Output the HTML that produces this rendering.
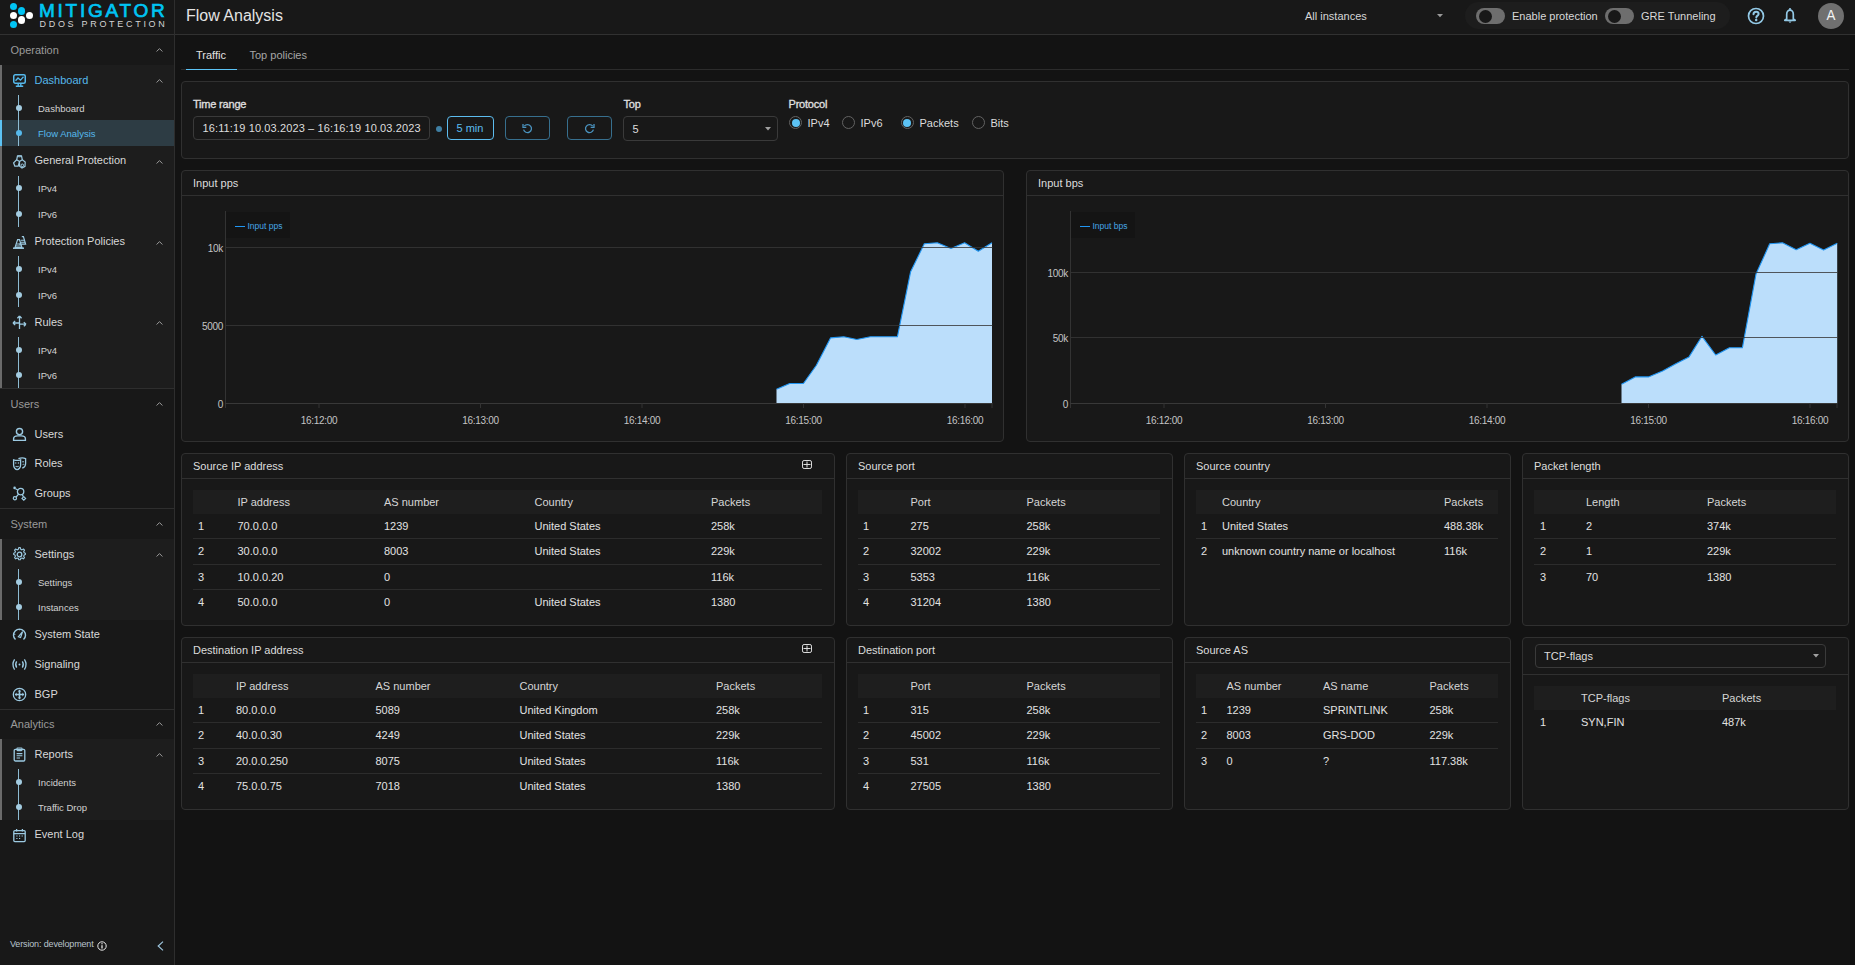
<!DOCTYPE html><html><head><meta charset="utf-8"><title>Flow Analysis</title><style>
*{box-sizing:border-box}
html,body{margin:0;padding:0}
body{width:1855px;height:965px;overflow:hidden;background:#131313;font-family:"Liberation Sans",sans-serif;position:relative}
.a{position:absolute}
.t{position:absolute;white-space:nowrap}
svg{position:absolute;overflow:visible}
</style></head><body>
<div class="a" style="left:0px;top:0px;width:1855px;height:34px;background:#181818"></div>
<div class="a" style="left:0px;top:34px;width:1855px;height:1px;background:#313131"></div>
<div class="a" style="left:1850px;top:35px;width:5px;height:930px;background:#101010"></div>
<div class="a" style="left:0px;top:35px;width:174px;height:930px;background:#181818"></div>
<div class="a" style="left:174px;top:0px;width:1px;height:965px;background:#2e2e2e"></div>
<div class="a" style="left:9.899999999999999px;top:2.8999999999999995px;width:7.4px;height:7.4px;border-radius:50%;background:#00c4f4"></div>
<div class="a" style="left:17.7px;top:7.2px;width:7.4px;height:7.4px;border-radius:50%;background:#00c4f4"></div>
<div class="a" style="left:9.899999999999999px;top:11.8px;width:7.4px;height:7.4px;border-radius:50%;background:#ffffff"></div>
<div class="a" style="left:25.7px;top:11.8px;width:7.4px;height:7.4px;border-radius:50%;background:#ffffff"></div>
<div class="a" style="left:17.7px;top:16.2px;width:7.4px;height:7.4px;border-radius:50%;background:#ffffff"></div>
<div class="a" style="left:9.899999999999999px;top:20.8px;width:7.4px;height:7.4px;border-radius:50%;background:#00c4f4"></div>
<div class="t" style="left:39px;top:1px;font-size:19px;line-height:19px;color:#00c4f4;letter-spacing:2.75px;-webkit-text-stroke:0.7px #00c4f4">MITIGATOR</div>
<div class="t" style="left:39.5px;top:20px;font-size:9px;line-height:9px;color:#d4d4d4;letter-spacing:2.7px">DDOS PROTECTION</div>
<div class="t" style="left:186px;top:8px;font-size:16px;line-height:16px;color:#e4e4e4;">Flow Analysis</div>
<div class="t" style="left:1305px;top:11px;font-size:11px;line-height:11px;color:#d6d6d6;">All instances</div>
<svg style="left:1436.5px;top:13.5px" width="6" height="4"><path d="M0 0 L6 0 L3 3.2 Z" fill="#9a9a9a"/></svg>
<div class="a" style="left:1465px;top:2px;width:265px;height:27px;background:#1d1d1d;border-radius:14px"></div>
<div class="a" style="left:1476px;top:8px;width:29px;height:16px;background:#6e6e6e;border-radius:8px"></div>
<div class="a" style="left:1479px;top:9.5px;width:13px;height:13px;background:#181818;border-radius:50%"></div>
<div class="a" style="left:1605px;top:8px;width:29px;height:16px;background:#6e6e6e;border-radius:8px"></div>
<div class="a" style="left:1608px;top:9.5px;width:13px;height:13px;background:#181818;border-radius:50%"></div>
<div class="t" style="left:1512px;top:11px;font-size:11px;line-height:11px;color:#d8d8d8;">Enable protection</div>
<div class="t" style="left:1641px;top:11px;font-size:11px;line-height:11px;color:#d8d8d8;">GRE Tunneling</div>
<svg style="left:1747px;top:7px" width="18" height="18" viewBox="0 0 18 18"><circle cx="9" cy="9" r="7.5" fill="none" stroke="#93c9e6" stroke-width="1.7"/><path d="M6.5 7.2 C6.5 5.5 7.7 4.7 9.1 4.7 C10.6 4.7 11.6 5.6 11.6 6.9 C11.6 8.5 9.4 8.7 9.3 10.4" fill="none" stroke="#93c9e6" stroke-width="2" stroke-linecap="round"/><circle cx="9.2" cy="13.1" r="1.25" fill="#93c9e6"/></svg>
<svg style="left:1784px;top:8px" width="12" height="15" viewBox="0 0 12 15"><rect x="5.2" y="0" width="1.6" height="2.2" fill="#93c9e6"/><path d="M2.7 11 L2.7 6.2 C2.7 3.7 4.1 2.2 6 2.2 C7.9 2.2 9.3 3.7 9.3 6.2 L9.3 11 L11.2 12.3 L0.8 12.3 Z" fill="none" stroke="#93c9e6" stroke-width="1.7" stroke-linejoin="round"/><path d="M4.4 13.4 L7.6 13.4 L6 14.9 Z" fill="#93c9e6"/></svg>
<div class="a" style="left:1818px;top:3px;width:26px;height:26px;background:#707070;border-radius:50%"></div>
<div class="t" style="left:1818px;top:5px;width:26px;text-align:center;font-size:15.5px;line-height:20px;color:#f4f4f4;transform:scaleX(0.86)">A</div>
<div class="a" style="left:0px;top:35px;width:174px;height:30px;background:#181818"></div>
<div class="t" style="left:10.5px;top:45px;font-size:11px;line-height:11px;color:#9a9a9a;">Operation</div>
<svg style="left:156px;top:48px" width="7" height="4" viewBox="0 0 7 4"><path d="M0.6 3.5 L3.5 0.6 L6.4 3.5" fill="none" stroke="#a9a9a9" stroke-width="0.9"/></svg>
<div class="a" style="left:0px;top:65px;width:174px;height:323px;background:#1d1d1d"></div>
<div class="a" style="left:0px;top:65px;width:2px;height:323px;background:#6b6b6b"></div>
<svg style="left:12px;top:73px" width="15" height="15" viewBox="0 0 15 15"><rect x="1.75" y="1.75" width="11.5" height="8.5" rx="1.5" fill="none" stroke="#56b9ec" stroke-width="1.5"/><path d="M3.5 7.8 L6 5 L8.5 7.2 L11.5 3.8" fill="none" stroke="#56b9ec" stroke-width="1.3"/><path d="M6.2 10.5 L6.2 12.5 M8.8 10.5 L8.8 12.5 M3.8 13.3 L11.2 13.3" stroke="#56b9ec" stroke-width="1.4"/></svg>
<div class="t" style="left:34.5px;top:74.6px;font-size:11px;line-height:11px;color:#56b9ec;">Dashboard</div>
<svg style="left:156px;top:79px" width="7" height="4" viewBox="0 0 7 4"><path d="M0.6 3.5 L3.5 0.6 L6.4 3.5" fill="none" stroke="#a9a9a9" stroke-width="0.9"/></svg>
<div class="t" style="left:38px;top:103.5px;font-size:9.5px;line-height:9.5px;color:#d2d2d2;">Dashboard</div>
<div class="a" style="left:0px;top:120.25px;width:174px;height:25.5px;background:#2d3c44"></div>
<div class="a" style="left:0px;top:120.25px;width:2px;height:25.5px;background:#5cc3f5"></div>
<div class="t" style="left:38px;top:129.0px;font-size:9.5px;line-height:9.5px;color:#56b9ec;">Flow Analysis</div>
<div class="a" style="left:18px;top:94.75px;width:1.2px;height:51px;background:#8dbbd2"></div>
<div class="a" style="left:15.600000000000001px;top:104.5px;width:6px;height:6px;border-radius:50%;background:#a3cbe0"></div>
<div class="a" style="left:15.600000000000001px;top:130.0px;width:6px;height:6px;border-radius:50%;background:#56b9ec"></div>
<svg style="left:12px;top:153.75px" width="15" height="15" viewBox="0 0 15 15"><path d="M5.5 1.8 L9.5 1.8 L10.3 5.8 L7.5 7.6 L4.7 5.8 Z" fill="none" stroke="#9ccae2" stroke-width="1.2"/><ellipse cx="7.5" cy="2.3" rx="1.6" ry="0.6" fill="none" stroke="#9ccae2" stroke-width="0.9"/><path d="M4.7 5.8 L1.6 8.8 L2.8 12.2 L6.2 12.2 L7.5 7.6" fill="none" stroke="#9ccae2" stroke-width="1.2"/><path d="M10.3 5.8 L13.2 8 L13 12.3 L10 14 L7.6 12.3 L7.5 7.6" fill="none" stroke="#9ccae2" stroke-width="1.2"/><circle cx="10.3" cy="11.3" r="1.3" fill="none" stroke="#9ccae2" stroke-width="1"/></svg>
<div class="t" style="left:34.5px;top:155.35px;font-size:11px;line-height:11px;color:#d8d8d8;">General Protection</div>
<svg style="left:156px;top:159.75px" width="7" height="4" viewBox="0 0 7 4"><path d="M0.6 3.5 L3.5 0.6 L6.4 3.5" fill="none" stroke="#a9a9a9" stroke-width="0.9"/></svg>
<div class="t" style="left:38px;top:184.25px;font-size:9.5px;line-height:9.5px;color:#d2d2d2;">IPv4</div>
<div class="t" style="left:38px;top:209.75px;font-size:9.5px;line-height:9.5px;color:#d2d2d2;">IPv6</div>
<div class="a" style="left:18px;top:175.5px;width:1.2px;height:51px;background:#8dbbd2"></div>
<div class="a" style="left:15.600000000000001px;top:185.25px;width:6px;height:6px;border-radius:50%;background:#a3cbe0"></div>
<div class="a" style="left:15.600000000000001px;top:210.75px;width:6px;height:6px;border-radius:50%;background:#a3cbe0"></div>
<svg style="left:12px;top:234.5px" width="15" height="15" viewBox="0 0 15 15"><path d="M9.8 1.6 L11.4 1.6 L13.6 9.2 L7.2 9.2" fill="none" stroke="#9ccae2" stroke-width="1.2"/><path d="M8.6 5.2 L12.6 5.2 M8.3 7.3 L13.2 7.3" stroke="#9ccae2" stroke-width="1.1"/><path d="M5.6 4.6 L7.4 4.6 L10 12.6 L3 12.6 Z" fill="none" stroke="#9ccae2" stroke-width="1.2"/><path d="M1 13.2 L12 13.2" stroke="#9ccae2" stroke-width="1.5"/><path d="M4.5 9 L8.6 9 M4 11 L9.2 11" stroke="#9ccae2" stroke-width="1.1"/></svg>
<div class="t" style="left:34.5px;top:236.1px;font-size:11px;line-height:11px;color:#d8d8d8;">Protection Policies</div>
<svg style="left:156px;top:240.5px" width="7" height="4" viewBox="0 0 7 4"><path d="M0.6 3.5 L3.5 0.6 L6.4 3.5" fill="none" stroke="#a9a9a9" stroke-width="0.9"/></svg>
<div class="t" style="left:38px;top:265.0px;font-size:9.5px;line-height:9.5px;color:#d2d2d2;">IPv4</div>
<div class="t" style="left:38px;top:290.5px;font-size:9.5px;line-height:9.5px;color:#d2d2d2;">IPv6</div>
<div class="a" style="left:18px;top:256.25px;width:1.2px;height:51px;background:#8dbbd2"></div>
<div class="a" style="left:15.600000000000001px;top:266.0px;width:6px;height:6px;border-radius:50%;background:#a3cbe0"></div>
<div class="a" style="left:15.600000000000001px;top:291.5px;width:6px;height:6px;border-radius:50%;background:#a3cbe0"></div>
<svg style="left:12px;top:315.25px" width="15" height="15" viewBox="0 0 15 15"><path d="M7.5 1 L7.5 14 M7.5 1 L5.4 3.2 M7.5 1 L9.6 3.2" fill="none" stroke="#9ccae2" stroke-width="1.3"/><path d="M1 8 L7.3 8 M1 8 L3.2 5.9 M1 8 L3.2 10.1" fill="none" stroke="#9ccae2" stroke-width="1.3"/><path d="M7.7 9.2 L14 9.2 M14 9.2 L11.8 7.1 M14 9.2 L11.8 11.3" fill="none" stroke="#9ccae2" stroke-width="1.3"/></svg>
<div class="t" style="left:34.5px;top:316.85px;font-size:11px;line-height:11px;color:#d8d8d8;">Rules</div>
<svg style="left:156px;top:321.25px" width="7" height="4" viewBox="0 0 7 4"><path d="M0.6 3.5 L3.5 0.6 L6.4 3.5" fill="none" stroke="#a9a9a9" stroke-width="0.9"/></svg>
<div class="t" style="left:38px;top:345.75px;font-size:9.5px;line-height:9.5px;color:#d2d2d2;">IPv4</div>
<div class="t" style="left:38px;top:371.25px;font-size:9.5px;line-height:9.5px;color:#d2d2d2;">IPv6</div>
<div class="a" style="left:18px;top:337.0px;width:1.2px;height:51px;background:#8dbbd2"></div>
<div class="a" style="left:15.600000000000001px;top:346.75px;width:6px;height:6px;border-radius:50%;background:#a3cbe0"></div>
<div class="a" style="left:15.600000000000001px;top:372.25px;width:6px;height:6px;border-radius:50%;background:#a3cbe0"></div>
<div class="a" style="left:0px;top:388px;width:174px;height:1px;background:#2e2e2e"></div>
<div class="a" style="left:0px;top:389px;width:174px;height:30px;background:#181818"></div>
<div class="t" style="left:10.5px;top:399px;font-size:11px;line-height:11px;color:#9a9a9a;">Users</div>
<svg style="left:156px;top:402px" width="7" height="4" viewBox="0 0 7 4"><path d="M0.6 3.5 L3.5 0.6 L6.4 3.5" fill="none" stroke="#a9a9a9" stroke-width="0.9"/></svg>
<svg style="left:12px;top:426.75px" width="15" height="15" viewBox="0 0 15 15"><circle cx="7.5" cy="4.6" r="3.1" fill="none" stroke="#9ccae2" stroke-width="1.4"/><path d="M1.6 13.4 L1.6 11.8 C1.6 10 3.6 8.9 5.6 8.9 L9.4 8.9 C11.4 8.9 13.4 10 13.4 11.8 L13.4 13.4 Z" fill="none" stroke="#9ccae2" stroke-width="1.4"/></svg>
<div class="t" style="left:34.5px;top:429px;font-size:11px;line-height:11px;color:#d8d8d8;">Users</div>
<svg style="left:12px;top:456.25px" width="15" height="15" viewBox="0 0 15 15"><path d="M1.6 3.8 C4 4.6 6.5 4.6 8.6 3.8 L8.6 9 C8.6 11.5 6.7 13.6 5.1 13.6 C3.5 13.6 1.6 11.5 1.6 9 Z" fill="none" stroke="#9ccae2" stroke-width="1.3"/><path d="M6.4 2.6 C9 1.6 11.4 1.6 13.6 2.6 L13.6 7.5 C13.6 9.8 12.2 11.5 10.3 12" fill="none" stroke="#9ccae2" stroke-width="1.3"/><path d="M3.6 10 C4.5 11 5.7 11 6.6 10" fill="none" stroke="#9ccae2" stroke-width="1.1"/><circle cx="3.8" cy="7" r="0.7" fill="#9ccae2"/><circle cx="6.4" cy="7" r="0.7" fill="#9ccae2"/><path d="M10.2 5.8 L12 5.8 M10.6 8.6 C11.2 8.2 11.8 8.2 12.3 8.6" stroke="#9ccae2" stroke-width="1"/></svg>
<div class="t" style="left:34.5px;top:458px;font-size:11px;line-height:11px;color:#d8d8d8;">Roles</div>
<svg style="left:12px;top:485.75px" width="15" height="15" viewBox="0 0 15 15"><circle cx="8.6" cy="5.6" r="3.2" fill="none" stroke="#9ccae2" stroke-width="1.3"/><circle cx="2.6" cy="1.9" r="1.3" fill="#9ccae2"/><path d="M3.5 2.7 L6.3 4.2" stroke="#9ccae2" stroke-width="1.2"/><circle cx="2.9" cy="12.2" r="1.6" fill="none" stroke="#9ccae2" stroke-width="1.2"/><path d="M4.1 11 L6.6 8.2" stroke="#9ccae2" stroke-width="1.2"/><path d="M11.8 10.6 L13.6 12.4 L11.8 14.2 L10 12.4 Z" fill="none" stroke="#9ccae2" stroke-width="1.2"/><path d="M10 8.4 L11.4 10.6" stroke="#9ccae2" stroke-width="1.2"/></svg>
<div class="t" style="left:34.5px;top:488px;font-size:11px;line-height:11px;color:#d8d8d8;">Groups</div>
<div class="a" style="left:0px;top:508px;width:174px;height:1px;background:#2e2e2e"></div>
<div class="a" style="left:0px;top:509px;width:174px;height:30px;background:#181818"></div>
<div class="t" style="left:10.5px;top:519px;font-size:11px;line-height:11px;color:#9a9a9a;">System</div>
<svg style="left:156px;top:522px" width="7" height="4" viewBox="0 0 7 4"><path d="M0.6 3.5 L3.5 0.6 L6.4 3.5" fill="none" stroke="#a9a9a9" stroke-width="0.9"/></svg>
<div class="a" style="left:0px;top:539px;width:174px;height:80.75px;background:#1d1d1d"></div>
<div class="a" style="left:0px;top:539px;width:2px;height:80.75px;background:#6b6b6b"></div>
<svg style="left:12px;top:547px" width="15" height="15" viewBox="0 0 15 15"><path d="M6.6 1.2 L8.4 1.2 L8.9 3.2 L10.3 3.8 L12 2.8 L13.3 4.1 L12.3 5.8 L12.9 7.2 L14.3 7.7 L14.3 9.3 L12.9 9.8 L12.3 11.2 L13.3 12.9 L12 14.2 L10.3 13.2 L8.9 13.8 L8.4 15.3 L6.6 15.3 L6.1 13.8 L4.7 13.2 L3 14.2 L1.7 12.9 L2.7 11.2 L2.1 9.8 L0.7 9.3 L0.7 7.7 L2.1 7.2 L2.7 5.8 L1.7 4.1 L3 2.8 L4.7 3.8 L6.1 3.2 Z" transform="translate(1.1 -0.4) scale(0.86)" fill="none" stroke="#9ccae2" stroke-width="1.3" stroke-linejoin="round"/><circle cx="7.5" cy="7.5" r="2.3" fill="none" stroke="#9ccae2" stroke-width="1.3"/></svg>
<div class="t" style="left:34.5px;top:548.6px;font-size:11px;line-height:11px;color:#d8d8d8;">Settings</div>
<svg style="left:156px;top:553px" width="7" height="4" viewBox="0 0 7 4"><path d="M0.6 3.5 L3.5 0.6 L6.4 3.5" fill="none" stroke="#a9a9a9" stroke-width="0.9"/></svg>
<div class="t" style="left:38px;top:577.5px;font-size:9.5px;line-height:9.5px;color:#d2d2d2;">Settings</div>
<div class="t" style="left:38px;top:603.0px;font-size:9.5px;line-height:9.5px;color:#d2d2d2;">Instances</div>
<div class="a" style="left:18px;top:568.75px;width:1.2px;height:51px;background:#8dbbd2"></div>
<div class="a" style="left:15.600000000000001px;top:578.5px;width:6px;height:6px;border-radius:50%;background:#a3cbe0"></div>
<div class="a" style="left:15.600000000000001px;top:604.0px;width:6px;height:6px;border-radius:50%;background:#a3cbe0"></div>
<svg style="left:12px;top:626.625px" width="15" height="15" viewBox="0 0 15 15"><path d="M3.5 12.6 A6 6 0 1 1 11.5 12.6" fill="none" stroke="#9ccae2" stroke-width="1.4"/><path d="M6.3 9.8 L10.6 4.6 L8.6 10.6 Z" fill="none" stroke="#9ccae2" stroke-width="1.2"/><path d="M2.2 7 L3.3 7.4 M7.5 2 L7.5 3.3" stroke="#9ccae2" stroke-width="1.1"/></svg>
<div class="t" style="left:34.5px;top:629px;font-size:11px;line-height:11px;color:#d8d8d8;">System State</div>
<svg style="left:12px;top:657.375px" width="15" height="15" viewBox="0 0 15 15"><circle cx="7.5" cy="7.5" r="1" fill="#9ccae2"/><path d="M4.7 4.4 C3.5 6.2 3.5 8.8 4.7 10.6 M10.3 4.4 C11.5 6.2 11.5 8.8 10.3 10.6" fill="none" stroke="#9ccae2" stroke-width="1.3"/><path d="M2.6 2.4 C0.6 5.4 0.6 9.6 2.6 12.6 M12.4 2.4 C14.4 5.4 14.4 9.6 12.4 12.6" fill="none" stroke="#9ccae2" stroke-width="1.3"/></svg>
<div class="t" style="left:34.5px;top:659px;font-size:11px;line-height:11px;color:#d8d8d8;">Signaling</div>
<svg style="left:12px;top:687.125px" width="15" height="15" viewBox="0 0 15 15"><circle cx="7.5" cy="7.5" r="6.2" fill="none" stroke="#9ccae2" stroke-width="1.3"/><path d="M7.5 2.6 L9.4 4.6 L8.3 4.6 L8.3 6.7 L10.4 6.7 L10.4 5.6 L12.4 7.5 L10.4 9.4 L10.4 8.3 L8.3 8.3 L8.3 10.4 L9.4 10.4 L7.5 12.4 L5.6 10.4 L6.7 10.4 L6.7 8.3 L4.6 8.3 L4.6 9.4 L2.6 7.5 L4.6 5.6 L4.6 6.7 L6.7 6.7 L6.7 4.6 L5.6 4.6 Z" fill="#9ccae2"/></svg>
<div class="t" style="left:34.5px;top:689px;font-size:11px;line-height:11px;color:#d8d8d8;">BGP</div>
<div class="a" style="left:0px;top:709px;width:174px;height:1px;background:#2e2e2e"></div>
<div class="a" style="left:0px;top:710px;width:174px;height:29px;background:#181818"></div>
<div class="t" style="left:10.5px;top:719px;font-size:11px;line-height:11px;color:#9a9a9a;">Analytics</div>
<svg style="left:156px;top:722px" width="7" height="4" viewBox="0 0 7 4"><path d="M0.6 3.5 L3.5 0.6 L6.4 3.5" fill="none" stroke="#a9a9a9" stroke-width="0.9"/></svg>
<div class="a" style="left:0px;top:739px;width:174px;height:80.75px;background:#1d1d1d"></div>
<div class="a" style="left:0px;top:739px;width:2px;height:80.75px;background:#6b6b6b"></div>
<svg style="left:12px;top:747px" width="15" height="15" viewBox="0 0 15 15"><rect x="2.2" y="2.4" width="10.6" height="11.6" rx="1.2" fill="none" stroke="#9ccae2" stroke-width="1.3"/><rect x="5" y="1" width="5" height="2.6" rx="0.6" fill="none" stroke="#9ccae2" stroke-width="1.1"/><path d="M4.6 6.6 L10.4 6.6 M4.6 8.8 L10.4 8.8 M4.6 11 L8 11" stroke="#9ccae2" stroke-width="1.1"/></svg>
<div class="t" style="left:34.5px;top:748.6px;font-size:11px;line-height:11px;color:#d8d8d8;">Reports</div>
<svg style="left:156px;top:753px" width="7" height="4" viewBox="0 0 7 4"><path d="M0.6 3.5 L3.5 0.6 L6.4 3.5" fill="none" stroke="#a9a9a9" stroke-width="0.9"/></svg>
<div class="t" style="left:38px;top:777.5px;font-size:9.5px;line-height:9.5px;color:#d2d2d2;">Incidents</div>
<div class="t" style="left:38px;top:803.0px;font-size:9.5px;line-height:9.5px;color:#d2d2d2;">Traffic Drop</div>
<div class="a" style="left:18px;top:768.75px;width:1.2px;height:51px;background:#8dbbd2"></div>
<div class="a" style="left:15.600000000000001px;top:778.5px;width:6px;height:6px;border-radius:50%;background:#a3cbe0"></div>
<div class="a" style="left:15.600000000000001px;top:804.0px;width:6px;height:6px;border-radius:50%;background:#a3cbe0"></div>
<svg style="left:12px;top:827.5px" width="15" height="15" viewBox="0 0 15 15"><rect x="1.8" y="2.6" width="11.4" height="11" rx="1" fill="none" stroke="#9ccae2" stroke-width="1.3"/><path d="M1.8 5.6 L13.2 5.6 M4.6 1 L4.6 3.6 M10.4 1 L10.4 3.6" stroke="#9ccae2" stroke-width="1.3"/><path d="M4.3 8 L5.5 8 M7 8 L8.2 8 M9.6 8 L10.8 8 M4.3 10.5 L5.5 10.5 M7 10.5 L8.2 10.5" stroke="#9ccae2" stroke-width="1.1"/></svg>
<div class="t" style="left:34.5px;top:829px;font-size:11px;line-height:11px;color:#d8d8d8;">Event Log</div>
<div class="t" style="left:10px;top:940px;font-size:9px;line-height:9px;color:#b8c4cc;letter-spacing:-0.15px">Version: development</div>
<svg style="left:96.5px;top:940.5px" width="10" height="10" viewBox="0 0 10 10"><circle cx="5" cy="5" r="4.2" fill="none" stroke="#e8e8e8" stroke-width="1"/><path d="M5 4.2 L5 7.6" stroke="#e8e8e8" stroke-width="1.3"/><circle cx="5" cy="2.7" r="0.7" fill="#e8e8e8"/></svg>
<svg style="left:157px;top:940.5px" width="7" height="10" viewBox="0 0 7 10"><path d="M6 0.6 L1.2 5 L6 9.4" fill="none" stroke="#9cc4dc" stroke-width="1.2"/></svg>
<div class="a" style="left:181px;top:69px;width:1668px;height:1px;background:#2c2c2c"></div>
<div class="a" style="left:186px;top:68.7px;width:51px;height:1.6px;background:#5cc3f5"></div>
<div class="t" style="left:196px;top:50px;font-size:11px;line-height:11px;color:#e2e2e2;">Traffic</div>
<div class="t" style="left:249.5px;top:50px;font-size:11px;line-height:11px;color:#a6a6a6;">Top policies</div>
<div class="a" style="left:181px;top:81px;width:1668px;height:78px;background:#181818;border:1px solid #303030;border-radius:4px;"></div>
<div class="t" style="left:193px;top:99px;font-size:11px;line-height:11px;color:#e0e0e0;-webkit-text-stroke:0.3px #e0e0e0;letter-spacing:-0.2px">Time range</div>
<div class="a" style="left:193px;top:116px;width:237px;height:24px;border:1px solid #3a3a3a;border-radius:4px"></div>
<div class="t" style="left:202.5px;top:123px;font-size:11px;line-height:11px;color:#dedede;letter-spacing:0.12px">16:11:19 10.03.2023 &#8211; 16:16:19 10.03.2023</div>
<div class="a" style="left:435.5px;top:125.5px;width:6px;height:6px;border-radius:50%;background:#3f7fa3"></div>
<div class="a" style="left:447px;top:116px;width:47px;height:24px;border:1px solid #5cbcef;border-radius:4px"></div>
<div class="t" style="left:456.5px;top:123px;font-size:11px;line-height:11px;color:#5cbcef;">5 min</div>
<div class="a" style="left:505px;top:116px;width:45px;height:24px;border:1px solid #376f8e;border-radius:4px"></div>
<div class="a" style="left:567px;top:116px;width:45px;height:24px;border:1px solid #376f8e;border-radius:4px"></div>
<svg style="left:522px;top:123px" width="11" height="11" viewBox="0 0 11 11"><path d="M2.3 3.2 A4 4 0 1 1 1.6 6.6" fill="none" stroke="#4a93bf" stroke-width="1.3"/><path d="M1 1 L1 4.3 L4.3 4.3" fill="none" stroke="#4a93bf" stroke-width="1.3"/></svg>
<svg style="left:584px;top:123px" width="11" height="11" viewBox="0 0 11 11"><path d="M8.7 3.2 A4 4 0 1 0 9.4 6.6" fill="none" stroke="#4a93bf" stroke-width="1.3"/><path d="M10 1 L10 4.3 L6.7 4.3" fill="none" stroke="#4a93bf" stroke-width="1.3"/></svg>
<div class="t" style="left:623.5px;top:99px;font-size:11px;line-height:11px;color:#e0e0e0;-webkit-text-stroke:0.3px #e0e0e0;letter-spacing:-0.2px">Top</div>
<div class="a" style="left:623px;top:116px;width:155px;height:25px;border:1px solid #3a3a3a;border-radius:4px"></div>
<div class="t" style="left:632.5px;top:124px;font-size:11px;line-height:11px;color:#dedede;">5</div>
<svg style="left:764.5px;top:126.5px" width="6" height="4"><path d="M0 0 L6 0 L3 3.5 Z" fill="#a0a0a0"/></svg>
<div class="t" style="left:788.5px;top:99px;font-size:11px;line-height:11px;color:#e0e0e0;-webkit-text-stroke:0.3px #e0e0e0;letter-spacing:-0.2px">Protocol</div>
<div class="a" style="left:789.0px;top:116.1px;width:13px;height:13px;border-radius:50%;border:1.2px solid #626262"></div>
<div class="a" style="left:791.5px;top:118.6px;width:8px;height:8px;border-radius:50%;background:#5cc3f5"></div>
<div class="t" style="left:807.5px;top:118px;font-size:11px;line-height:11px;color:#dcdcdc;">IPv4</div>
<div class="a" style="left:841.8px;top:116.1px;width:13px;height:13px;border-radius:50%;border:1.2px solid #626262"></div>
<div class="t" style="left:860.5px;top:118px;font-size:11px;line-height:11px;color:#dcdcdc;">IPv6</div>
<div class="a" style="left:900.5px;top:116.1px;width:13px;height:13px;border-radius:50%;border:1.2px solid #626262"></div>
<div class="a" style="left:903px;top:118.6px;width:8px;height:8px;border-radius:50%;background:#5cc3f5"></div>
<div class="t" style="left:919.5px;top:118px;font-size:11px;line-height:11px;color:#dcdcdc;">Packets</div>
<div class="a" style="left:971.8px;top:116.1px;width:13px;height:13px;border-radius:50%;border:1.2px solid #626262"></div>
<div class="t" style="left:990.5px;top:118px;font-size:11px;line-height:11px;color:#dcdcdc;">Bits</div>
<div class="a" style="left:181px;top:170px;width:823px;height:272px;background:#181818;border:1px solid #303030;border-radius:4px;"></div>
<div class="a" style="left:182px;top:195px;width:821px;height:1px;background:#303030"></div>
<div class="t" style="left:193px;top:178px;font-size:11px;line-height:11px;color:#dcdcdc;">Input pps</div>
<div class="a" style="left:226px;top:212px;width:64px;height:26px;background:#141414"></div>
<div class="a" style="left:234.5px;top:225.8px;width:10.5px;height:1.3px;background:#2196f3"></div>
<div class="t" style="left:247.5px;top:222px;font-size:8.5px;line-height:8.5px;color:#46a6e6;">Input pps</div>
<svg style="left:225px;top:200px" width="777.5" height="220" viewBox="0 0 777.5 220"><polygon points="551.5,203 551.5,189.3 564.7,183.5 578.4,183.5 591.4,165.3 605.5,137.9 618.8,136.8 631.8,139.5 645.4,136.8 658.7,136.8 672.4,136.8 685.6,71.8 699.3,43.8 712.3,42.8 726.0,48.5 739.6,42.8 753.3,51.3 767.0,42.8 767.0,203" fill="#bbdefb"/><polyline points="551.5,189.3 564.7,183.5 578.4,183.5 591.4,165.3 605.5,137.9 618.8,136.8 631.8,139.5 645.4,136.8 658.7,136.8 672.4,136.8 685.6,71.8 699.3,43.8 712.3,42.8 726.0,48.5 739.6,42.8 753.3,51.3 767.0,42.8" fill="none" stroke="#2196f3" stroke-width="1.1" stroke-linejoin="round"/><line x1="1" y1="47.5" x2="767.5" y2="47.5" stroke="rgba(55,55,55,0.82)" stroke-width="1"/><line x1="1" y1="125.5" x2="767.5" y2="125.5" stroke="rgba(55,55,55,0.82)" stroke-width="1"/><line x1="0.5" y1="11" x2="0.5" y2="208" stroke="#333" stroke-width="1"/><line x1="0" y1="203.5" x2="767.5" y2="203.5" stroke="#383838" stroke-width="1"/><line x1="94.0" y1="203" x2="94.0" y2="208" stroke="#333" stroke-width="1"/><line x1="255.5" y1="203" x2="255.5" y2="208" stroke="#333" stroke-width="1"/><line x1="417.0" y1="203" x2="417.0" y2="208" stroke="#333" stroke-width="1"/><line x1="578.5" y1="203" x2="578.5" y2="208" stroke="#333" stroke-width="1"/><line x1="740.0" y1="203" x2="740.0" y2="208" stroke="#333" stroke-width="1"/><line x1="767.0" y1="203" x2="767.0" y2="208" stroke="#333" stroke-width="1"/></svg>
<div class="t" style="left:166px;top:244px;width:57px;text-align:right;font-size:10px;line-height:10px;color:#c4c4c4;letter-spacing:-0.3px">10k</div>
<div class="t" style="left:166px;top:322px;width:57px;text-align:right;font-size:10px;line-height:10px;color:#c4c4c4;letter-spacing:-0.3px">5000</div>
<div class="t" style="left:166px;top:400px;width:57px;text-align:right;font-size:10px;line-height:10px;color:#c4c4c4;letter-spacing:-0.3px">0</div>
<div class="t" style="left:289.0px;top:416px;width:60px;text-align:center;font-size:10px;line-height:10px;color:#c4c4c4;letter-spacing:-0.3px">16:12:00</div>
<div class="t" style="left:450.5px;top:416px;width:60px;text-align:center;font-size:10px;line-height:10px;color:#c4c4c4;letter-spacing:-0.3px">16:13:00</div>
<div class="t" style="left:612.0px;top:416px;width:60px;text-align:center;font-size:10px;line-height:10px;color:#c4c4c4;letter-spacing:-0.3px">16:14:00</div>
<div class="t" style="left:773.5px;top:416px;width:60px;text-align:center;font-size:10px;line-height:10px;color:#c4c4c4;letter-spacing:-0.3px">16:15:00</div>
<div class="t" style="left:935.0px;top:416px;width:60px;text-align:center;font-size:10px;line-height:10px;color:#c4c4c4;letter-spacing:-0.3px">16:16:00</div>
<div class="a" style="left:1026px;top:170px;width:823px;height:272px;background:#181818;border:1px solid #303030;border-radius:4px;"></div>
<div class="a" style="left:1027px;top:195px;width:821px;height:1px;background:#303030"></div>
<div class="t" style="left:1038px;top:178px;font-size:11px;line-height:11px;color:#dcdcdc;">Input bps</div>
<div class="a" style="left:1071px;top:212px;width:64px;height:26px;background:#141414"></div>
<div class="a" style="left:1079.5px;top:225.8px;width:10.5px;height:1.3px;background:#2196f3"></div>
<div class="t" style="left:1092.5px;top:222px;font-size:8.5px;line-height:8.5px;color:#46a6e6;">Input bps</div>
<svg style="left:1070px;top:200px" width="777.5" height="220" viewBox="0 0 777.5 220"><polygon points="551.5,203 551.5,184.2 565.2,176.9 578.4,176.9 592.6,171.0 605.8,163.7 619.0,156.9 632.0,136.3 645.7,155.0 659.4,147.8 672.4,147.8 686.0,74.1 699.7,43.8 712.5,42.8 726.2,49.7 739.9,43.3 753.6,50.1 767.2,43.3 767.2,203" fill="#bbdefb"/><polyline points="551.5,184.2 565.2,176.9 578.4,176.9 592.6,171.0 605.8,163.7 619.0,156.9 632.0,136.3 645.7,155.0 659.4,147.8 672.4,147.8 686.0,74.1 699.7,43.8 712.5,42.8 726.2,49.7 739.9,43.3 753.6,50.1 767.2,43.3" fill="none" stroke="#2196f3" stroke-width="1.1" stroke-linejoin="round"/><line x1="1" y1="72.5" x2="767.5" y2="72.5" stroke="rgba(55,55,55,0.82)" stroke-width="1"/><line x1="1" y1="137.5" x2="767.5" y2="137.5" stroke="rgba(55,55,55,0.82)" stroke-width="1"/><line x1="0.5" y1="11" x2="0.5" y2="208" stroke="#333" stroke-width="1"/><line x1="0" y1="203.5" x2="767.5" y2="203.5" stroke="#383838" stroke-width="1"/><line x1="94.0" y1="203" x2="94.0" y2="208" stroke="#333" stroke-width="1"/><line x1="255.5" y1="203" x2="255.5" y2="208" stroke="#333" stroke-width="1"/><line x1="417.0" y1="203" x2="417.0" y2="208" stroke="#333" stroke-width="1"/><line x1="578.5" y1="203" x2="578.5" y2="208" stroke="#333" stroke-width="1"/><line x1="740.0" y1="203" x2="740.0" y2="208" stroke="#333" stroke-width="1"/><line x1="767.0" y1="203" x2="767.0" y2="208" stroke="#333" stroke-width="1"/></svg>
<div class="t" style="left:1011px;top:269px;width:57px;text-align:right;font-size:10px;line-height:10px;color:#c4c4c4;letter-spacing:-0.3px">100k</div>
<div class="t" style="left:1011px;top:334px;width:57px;text-align:right;font-size:10px;line-height:10px;color:#c4c4c4;letter-spacing:-0.3px">50k</div>
<div class="t" style="left:1011px;top:400px;width:57px;text-align:right;font-size:10px;line-height:10px;color:#c4c4c4;letter-spacing:-0.3px">0</div>
<div class="t" style="left:1134.0px;top:416px;width:60px;text-align:center;font-size:10px;line-height:10px;color:#c4c4c4;letter-spacing:-0.3px">16:12:00</div>
<div class="t" style="left:1295.5px;top:416px;width:60px;text-align:center;font-size:10px;line-height:10px;color:#c4c4c4;letter-spacing:-0.3px">16:13:00</div>
<div class="t" style="left:1457.0px;top:416px;width:60px;text-align:center;font-size:10px;line-height:10px;color:#c4c4c4;letter-spacing:-0.3px">16:14:00</div>
<div class="t" style="left:1618.5px;top:416px;width:60px;text-align:center;font-size:10px;line-height:10px;color:#c4c4c4;letter-spacing:-0.3px">16:15:00</div>
<div class="t" style="left:1780.0px;top:416px;width:60px;text-align:center;font-size:10px;line-height:10px;color:#c4c4c4;letter-spacing:-0.3px">16:16:00</div>
<div class="a" style="left:181px;top:453px;width:654px;height:173px;background:#181818;border:1px solid #303030;border-radius:4px;"></div>
<div class="a" style="left:182px;top:478px;width:652px;height:1px;background:#303030"></div>
<div class="t" style="left:193px;top:461px;font-size:11px;line-height:11px;color:#dcdcdc;">Source IP address</div>
<svg style="left:802px;top:460px" width="11" height="10" viewBox="0 0 11 10"><rect x="0.5" y="0.5" width="9" height="8" rx="1.6" fill="none" stroke="#dcdcdc" stroke-width="1"/><path d="M5 1.5 L5 7.5 M1.5 4.5 L8.5 4.5" stroke="#dcdcdc" stroke-width="1"/></svg>
<div class="a" style="left:193px;top:490px;width:629px;height:24px;background:#1e1e1e"></div>
<div class="t" style="left:237.5px;top:497px;font-size:11px;line-height:11px;color:#d6d6d6;">IP address</div>
<div class="t" style="left:384px;top:497px;font-size:11px;line-height:11px;color:#d6d6d6;">AS number</div>
<div class="t" style="left:534.5px;top:497px;font-size:11px;line-height:11px;color:#d6d6d6;">Country</div>
<div class="t" style="left:711px;top:497px;font-size:11px;line-height:11px;color:#d6d6d6;">Packets</div>
<div class="a" style="left:193px;top:538px;width:629px;height:1px;background:#2c2c2c"></div>
<div class="t" style="left:198px;top:521px;font-size:11px;line-height:11px;color:#e2e2e2;">1</div>
<div class="t" style="left:237.5px;top:521px;font-size:11px;line-height:11px;color:#e2e2e2;">70.0.0.0</div>
<div class="t" style="left:384px;top:521px;font-size:11px;line-height:11px;color:#e2e2e2;">1239</div>
<div class="t" style="left:534.5px;top:521px;font-size:11px;line-height:11px;color:#e2e2e2;">United States</div>
<div class="t" style="left:711px;top:521px;font-size:11px;line-height:11px;color:#e2e2e2;">258k</div>
<div class="a" style="left:193px;top:564px;width:629px;height:1px;background:#2c2c2c"></div>
<div class="t" style="left:198px;top:546px;font-size:11px;line-height:11px;color:#e2e2e2;">2</div>
<div class="t" style="left:237.5px;top:546px;font-size:11px;line-height:11px;color:#e2e2e2;">30.0.0.0</div>
<div class="t" style="left:384px;top:546px;font-size:11px;line-height:11px;color:#e2e2e2;">8003</div>
<div class="t" style="left:534.5px;top:546px;font-size:11px;line-height:11px;color:#e2e2e2;">United States</div>
<div class="t" style="left:711px;top:546px;font-size:11px;line-height:11px;color:#e2e2e2;">229k</div>
<div class="a" style="left:193px;top:589px;width:629px;height:1px;background:#2c2c2c"></div>
<div class="t" style="left:198px;top:572px;font-size:11px;line-height:11px;color:#e2e2e2;">3</div>
<div class="t" style="left:237.5px;top:572px;font-size:11px;line-height:11px;color:#e2e2e2;">10.0.0.20</div>
<div class="t" style="left:384px;top:572px;font-size:11px;line-height:11px;color:#e2e2e2;">0</div>
<div class="t" style="left:534.5px;top:572px;font-size:11px;line-height:11px;color:#e2e2e2;"></div>
<div class="t" style="left:711px;top:572px;font-size:11px;line-height:11px;color:#e2e2e2;">116k</div>
<div class="t" style="left:198px;top:597px;font-size:11px;line-height:11px;color:#e2e2e2;">4</div>
<div class="t" style="left:237.5px;top:597px;font-size:11px;line-height:11px;color:#e2e2e2;">50.0.0.0</div>
<div class="t" style="left:384px;top:597px;font-size:11px;line-height:11px;color:#e2e2e2;">0</div>
<div class="t" style="left:534.5px;top:597px;font-size:11px;line-height:11px;color:#e2e2e2;">United States</div>
<div class="t" style="left:711px;top:597px;font-size:11px;line-height:11px;color:#e2e2e2;">1380</div>
<div class="a" style="left:846px;top:453px;width:327px;height:173px;background:#181818;border:1px solid #303030;border-radius:4px;"></div>
<div class="a" style="left:847px;top:478px;width:325px;height:1px;background:#303030"></div>
<div class="t" style="left:858px;top:461px;font-size:11px;line-height:11px;color:#dcdcdc;">Source port</div>
<div class="a" style="left:858px;top:490px;width:302px;height:24px;background:#1e1e1e"></div>
<div class="t" style="left:910.5px;top:497px;font-size:11px;line-height:11px;color:#d6d6d6;">Port</div>
<div class="t" style="left:1026.5px;top:497px;font-size:11px;line-height:11px;color:#d6d6d6;">Packets</div>
<div class="a" style="left:858px;top:538px;width:302px;height:1px;background:#2c2c2c"></div>
<div class="t" style="left:863px;top:521px;font-size:11px;line-height:11px;color:#e2e2e2;">1</div>
<div class="t" style="left:910.5px;top:521px;font-size:11px;line-height:11px;color:#e2e2e2;">275</div>
<div class="t" style="left:1026.5px;top:521px;font-size:11px;line-height:11px;color:#e2e2e2;">258k</div>
<div class="a" style="left:858px;top:564px;width:302px;height:1px;background:#2c2c2c"></div>
<div class="t" style="left:863px;top:546px;font-size:11px;line-height:11px;color:#e2e2e2;">2</div>
<div class="t" style="left:910.5px;top:546px;font-size:11px;line-height:11px;color:#e2e2e2;">32002</div>
<div class="t" style="left:1026.5px;top:546px;font-size:11px;line-height:11px;color:#e2e2e2;">229k</div>
<div class="a" style="left:858px;top:589px;width:302px;height:1px;background:#2c2c2c"></div>
<div class="t" style="left:863px;top:572px;font-size:11px;line-height:11px;color:#e2e2e2;">3</div>
<div class="t" style="left:910.5px;top:572px;font-size:11px;line-height:11px;color:#e2e2e2;">5353</div>
<div class="t" style="left:1026.5px;top:572px;font-size:11px;line-height:11px;color:#e2e2e2;">116k</div>
<div class="t" style="left:863px;top:597px;font-size:11px;line-height:11px;color:#e2e2e2;">4</div>
<div class="t" style="left:910.5px;top:597px;font-size:11px;line-height:11px;color:#e2e2e2;">31204</div>
<div class="t" style="left:1026.5px;top:597px;font-size:11px;line-height:11px;color:#e2e2e2;">1380</div>
<div class="a" style="left:1184px;top:453px;width:327px;height:173px;background:#181818;border:1px solid #303030;border-radius:4px;"></div>
<div class="a" style="left:1185px;top:478px;width:325px;height:1px;background:#303030"></div>
<div class="t" style="left:1196px;top:461px;font-size:11px;line-height:11px;color:#dcdcdc;">Source country</div>
<div class="a" style="left:1196px;top:490px;width:302px;height:24px;background:#1e1e1e"></div>
<div class="t" style="left:1222px;top:497px;font-size:11px;line-height:11px;color:#d6d6d6;">Country</div>
<div class="t" style="left:1444px;top:497px;font-size:11px;line-height:11px;color:#d6d6d6;">Packets</div>
<div class="a" style="left:1196px;top:538px;width:302px;height:1px;background:#2c2c2c"></div>
<div class="t" style="left:1201px;top:521px;font-size:11px;line-height:11px;color:#e2e2e2;">1</div>
<div class="t" style="left:1222px;top:521px;font-size:11px;line-height:11px;color:#e2e2e2;">United States</div>
<div class="t" style="left:1444px;top:521px;font-size:11px;line-height:11px;color:#e2e2e2;">488.38k</div>
<div class="t" style="left:1201px;top:546px;font-size:11px;line-height:11px;color:#e2e2e2;">2</div>
<div class="t" style="left:1222px;top:546px;font-size:11px;line-height:11px;color:#e2e2e2;">unknown country name or localhost</div>
<div class="t" style="left:1444px;top:546px;font-size:11px;line-height:11px;color:#e2e2e2;">116k</div>
<div class="a" style="left:1522px;top:453px;width:327px;height:173px;background:#181818;border:1px solid #303030;border-radius:4px;"></div>
<div class="a" style="left:1523px;top:478px;width:325px;height:1px;background:#303030"></div>
<div class="t" style="left:1534px;top:461px;font-size:11px;line-height:11px;color:#dcdcdc;">Packet length</div>
<div class="a" style="left:1534px;top:490px;width:302px;height:24px;background:#1e1e1e"></div>
<div class="t" style="left:1586px;top:497px;font-size:11px;line-height:11px;color:#d6d6d6;">Length</div>
<div class="t" style="left:1707px;top:497px;font-size:11px;line-height:11px;color:#d6d6d6;">Packets</div>
<div class="a" style="left:1534px;top:538px;width:302px;height:1px;background:#2c2c2c"></div>
<div class="t" style="left:1540px;top:521px;font-size:11px;line-height:11px;color:#e2e2e2;">1</div>
<div class="t" style="left:1586px;top:521px;font-size:11px;line-height:11px;color:#e2e2e2;">2</div>
<div class="t" style="left:1707px;top:521px;font-size:11px;line-height:11px;color:#e2e2e2;">374k</div>
<div class="a" style="left:1534px;top:564px;width:302px;height:1px;background:#2c2c2c"></div>
<div class="t" style="left:1540px;top:546px;font-size:11px;line-height:11px;color:#e2e2e2;">2</div>
<div class="t" style="left:1586px;top:546px;font-size:11px;line-height:11px;color:#e2e2e2;">1</div>
<div class="t" style="left:1707px;top:546px;font-size:11px;line-height:11px;color:#e2e2e2;">229k</div>
<div class="t" style="left:1540px;top:572px;font-size:11px;line-height:11px;color:#e2e2e2;">3</div>
<div class="t" style="left:1586px;top:572px;font-size:11px;line-height:11px;color:#e2e2e2;">70</div>
<div class="t" style="left:1707px;top:572px;font-size:11px;line-height:11px;color:#e2e2e2;">1380</div>
<div class="a" style="left:181px;top:637px;width:654px;height:173px;background:#181818;border:1px solid #303030;border-radius:4px;"></div>
<div class="a" style="left:182px;top:662px;width:652px;height:1px;background:#303030"></div>
<div class="t" style="left:193px;top:645px;font-size:11px;line-height:11px;color:#dcdcdc;">Destination IP address</div>
<svg style="left:802px;top:644px" width="11" height="10" viewBox="0 0 11 10"><rect x="0.5" y="0.5" width="9" height="8" rx="1.6" fill="none" stroke="#dcdcdc" stroke-width="1"/><path d="M5 1.5 L5 7.5 M1.5 4.5 L8.5 4.5" stroke="#dcdcdc" stroke-width="1"/></svg>
<div class="a" style="left:193px;top:674px;width:629px;height:24px;background:#1e1e1e"></div>
<div class="t" style="left:236px;top:681px;font-size:11px;line-height:11px;color:#d6d6d6;">IP address</div>
<div class="t" style="left:375.5px;top:681px;font-size:11px;line-height:11px;color:#d6d6d6;">AS number</div>
<div class="t" style="left:519.5px;top:681px;font-size:11px;line-height:11px;color:#d6d6d6;">Country</div>
<div class="t" style="left:716px;top:681px;font-size:11px;line-height:11px;color:#d6d6d6;">Packets</div>
<div class="a" style="left:193px;top:722px;width:629px;height:1px;background:#2c2c2c"></div>
<div class="t" style="left:198px;top:705px;font-size:11px;line-height:11px;color:#e2e2e2;">1</div>
<div class="t" style="left:236px;top:705px;font-size:11px;line-height:11px;color:#e2e2e2;">80.0.0.0</div>
<div class="t" style="left:375.5px;top:705px;font-size:11px;line-height:11px;color:#e2e2e2;">5089</div>
<div class="t" style="left:519.5px;top:705px;font-size:11px;line-height:11px;color:#e2e2e2;">United Kingdom</div>
<div class="t" style="left:716px;top:705px;font-size:11px;line-height:11px;color:#e2e2e2;">258k</div>
<div class="a" style="left:193px;top:748px;width:629px;height:1px;background:#2c2c2c"></div>
<div class="t" style="left:198px;top:730px;font-size:11px;line-height:11px;color:#e2e2e2;">2</div>
<div class="t" style="left:236px;top:730px;font-size:11px;line-height:11px;color:#e2e2e2;">40.0.0.30</div>
<div class="t" style="left:375.5px;top:730px;font-size:11px;line-height:11px;color:#e2e2e2;">4249</div>
<div class="t" style="left:519.5px;top:730px;font-size:11px;line-height:11px;color:#e2e2e2;">United States</div>
<div class="t" style="left:716px;top:730px;font-size:11px;line-height:11px;color:#e2e2e2;">229k</div>
<div class="a" style="left:193px;top:773px;width:629px;height:1px;background:#2c2c2c"></div>
<div class="t" style="left:198px;top:756px;font-size:11px;line-height:11px;color:#e2e2e2;">3</div>
<div class="t" style="left:236px;top:756px;font-size:11px;line-height:11px;color:#e2e2e2;">20.0.0.250</div>
<div class="t" style="left:375.5px;top:756px;font-size:11px;line-height:11px;color:#e2e2e2;">8075</div>
<div class="t" style="left:519.5px;top:756px;font-size:11px;line-height:11px;color:#e2e2e2;">United States</div>
<div class="t" style="left:716px;top:756px;font-size:11px;line-height:11px;color:#e2e2e2;">116k</div>
<div class="t" style="left:198px;top:781px;font-size:11px;line-height:11px;color:#e2e2e2;">4</div>
<div class="t" style="left:236px;top:781px;font-size:11px;line-height:11px;color:#e2e2e2;">75.0.0.75</div>
<div class="t" style="left:375.5px;top:781px;font-size:11px;line-height:11px;color:#e2e2e2;">7018</div>
<div class="t" style="left:519.5px;top:781px;font-size:11px;line-height:11px;color:#e2e2e2;">United States</div>
<div class="t" style="left:716px;top:781px;font-size:11px;line-height:11px;color:#e2e2e2;">1380</div>
<div class="a" style="left:846px;top:637px;width:327px;height:173px;background:#181818;border:1px solid #303030;border-radius:4px;"></div>
<div class="a" style="left:847px;top:662px;width:325px;height:1px;background:#303030"></div>
<div class="t" style="left:858px;top:645px;font-size:11px;line-height:11px;color:#dcdcdc;">Destination port</div>
<div class="a" style="left:858px;top:674px;width:302px;height:24px;background:#1e1e1e"></div>
<div class="t" style="left:910.5px;top:681px;font-size:11px;line-height:11px;color:#d6d6d6;">Port</div>
<div class="t" style="left:1026.5px;top:681px;font-size:11px;line-height:11px;color:#d6d6d6;">Packets</div>
<div class="a" style="left:858px;top:722px;width:302px;height:1px;background:#2c2c2c"></div>
<div class="t" style="left:863px;top:705px;font-size:11px;line-height:11px;color:#e2e2e2;">1</div>
<div class="t" style="left:910.5px;top:705px;font-size:11px;line-height:11px;color:#e2e2e2;">315</div>
<div class="t" style="left:1026.5px;top:705px;font-size:11px;line-height:11px;color:#e2e2e2;">258k</div>
<div class="a" style="left:858px;top:748px;width:302px;height:1px;background:#2c2c2c"></div>
<div class="t" style="left:863px;top:730px;font-size:11px;line-height:11px;color:#e2e2e2;">2</div>
<div class="t" style="left:910.5px;top:730px;font-size:11px;line-height:11px;color:#e2e2e2;">45002</div>
<div class="t" style="left:1026.5px;top:730px;font-size:11px;line-height:11px;color:#e2e2e2;">229k</div>
<div class="a" style="left:858px;top:773px;width:302px;height:1px;background:#2c2c2c"></div>
<div class="t" style="left:863px;top:756px;font-size:11px;line-height:11px;color:#e2e2e2;">3</div>
<div class="t" style="left:910.5px;top:756px;font-size:11px;line-height:11px;color:#e2e2e2;">531</div>
<div class="t" style="left:1026.5px;top:756px;font-size:11px;line-height:11px;color:#e2e2e2;">116k</div>
<div class="t" style="left:863px;top:781px;font-size:11px;line-height:11px;color:#e2e2e2;">4</div>
<div class="t" style="left:910.5px;top:781px;font-size:11px;line-height:11px;color:#e2e2e2;">27505</div>
<div class="t" style="left:1026.5px;top:781px;font-size:11px;line-height:11px;color:#e2e2e2;">1380</div>
<div class="a" style="left:1184px;top:637px;width:327px;height:173px;background:#181818;border:1px solid #303030;border-radius:4px;"></div>
<div class="a" style="left:1185px;top:662px;width:325px;height:1px;background:#303030"></div>
<div class="t" style="left:1196px;top:645px;font-size:11px;line-height:11px;color:#dcdcdc;">Source AS</div>
<div class="a" style="left:1196px;top:674px;width:302px;height:24px;background:#1e1e1e"></div>
<div class="t" style="left:1226.5px;top:681px;font-size:11px;line-height:11px;color:#d6d6d6;">AS number</div>
<div class="t" style="left:1323px;top:681px;font-size:11px;line-height:11px;color:#d6d6d6;">AS name</div>
<div class="t" style="left:1429.5px;top:681px;font-size:11px;line-height:11px;color:#d6d6d6;">Packets</div>
<div class="a" style="left:1196px;top:722px;width:302px;height:1px;background:#2c2c2c"></div>
<div class="t" style="left:1201px;top:705px;font-size:11px;line-height:11px;color:#e2e2e2;">1</div>
<div class="t" style="left:1226.5px;top:705px;font-size:11px;line-height:11px;color:#e2e2e2;">1239</div>
<div class="t" style="left:1323px;top:705px;font-size:11px;line-height:11px;color:#e2e2e2;">SPRINTLINK</div>
<div class="t" style="left:1429.5px;top:705px;font-size:11px;line-height:11px;color:#e2e2e2;">258k</div>
<div class="a" style="left:1196px;top:748px;width:302px;height:1px;background:#2c2c2c"></div>
<div class="t" style="left:1201px;top:730px;font-size:11px;line-height:11px;color:#e2e2e2;">2</div>
<div class="t" style="left:1226.5px;top:730px;font-size:11px;line-height:11px;color:#e2e2e2;">8003</div>
<div class="t" style="left:1323px;top:730px;font-size:11px;line-height:11px;color:#e2e2e2;">GRS-DOD</div>
<div class="t" style="left:1429.5px;top:730px;font-size:11px;line-height:11px;color:#e2e2e2;">229k</div>
<div class="t" style="left:1201px;top:756px;font-size:11px;line-height:11px;color:#e2e2e2;">3</div>
<div class="t" style="left:1226.5px;top:756px;font-size:11px;line-height:11px;color:#e2e2e2;">0</div>
<div class="t" style="left:1323px;top:756px;font-size:11px;line-height:11px;color:#e2e2e2;">?</div>
<div class="t" style="left:1429.5px;top:756px;font-size:11px;line-height:11px;color:#e2e2e2;">117.38k</div>
<div class="a" style="left:1522px;top:637px;width:327px;height:173px;background:#181818;border:1px solid #303030;border-radius:4px;"></div>
<div class="a" style="left:1523px;top:674px;width:325px;height:1px;background:#303030"></div>
<div class="a" style="left:1535px;top:644px;width:291px;height:24px;border:1px solid #3a3a3a;border-radius:4px"></div>
<div class="t" style="left:1544px;top:651px;font-size:11px;line-height:11px;color:#dcdcdc;">TCP-flags</div>
<svg style="left:1813px;top:654px" width="6" height="4"><path d="M0 0 L6 0 L3 3.5 Z" fill="#a0a0a0"/></svg>
<div class="a" style="left:1534px;top:686px;width:302px;height:24px;background:#1e1e1e"></div>
<div class="t" style="left:1581px;top:693px;font-size:11px;line-height:11px;color:#d6d6d6;">TCP-flags</div>
<div class="t" style="left:1722px;top:693px;font-size:11px;line-height:11px;color:#d6d6d6;">Packets</div>
<div class="t" style="left:1540px;top:717px;font-size:11px;line-height:11px;color:#e2e2e2;">1</div>
<div class="t" style="left:1581px;top:717px;font-size:11px;line-height:11px;color:#e2e2e2;">SYN,FIN</div>
<div class="t" style="left:1722px;top:717px;font-size:11px;line-height:11px;color:#e2e2e2;">487k</div>
</body></html>
